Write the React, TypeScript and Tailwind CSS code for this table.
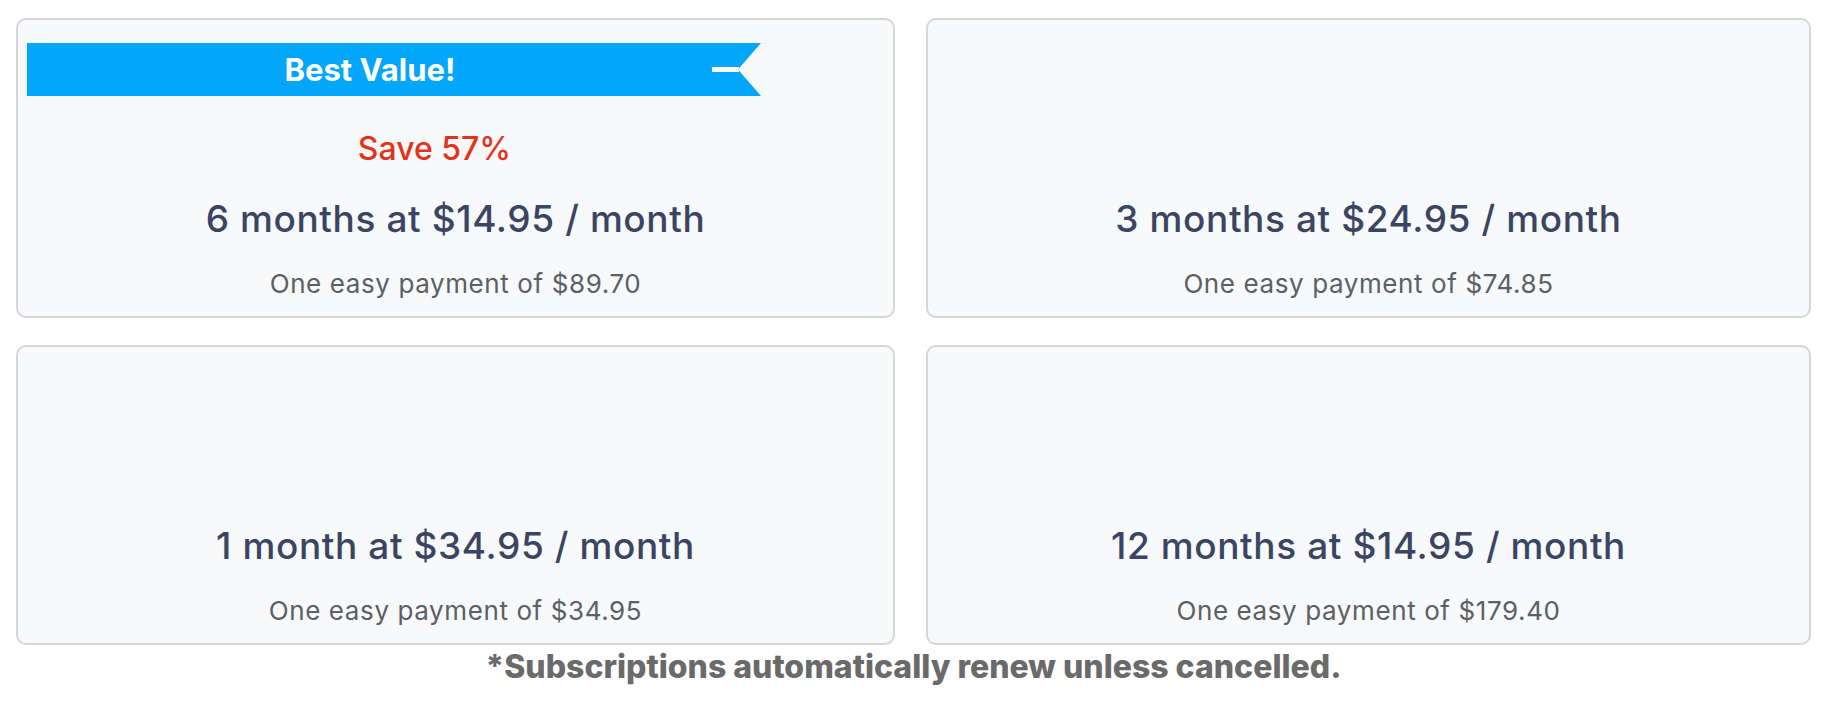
import React from "react";

type Plan = { title: string; sub: string; best?: boolean };

const plans: Plan[] = [
  { title: "6 months at $14.95 / month", sub: "One easy payment of $89.70", best: true },
  { title: "3 months at $24.95 / month", sub: "One easy payment of $74.85" },
  { title: "1 month at $34.95 / month", sub: "One easy payment of $34.95" },
  { title: "12 months at $14.95 / month", sub: "One easy payment of $179.40" },
];

function Card({ plan }: { plan: Plan }) {
  return (
    <div className="flex h-[300px] flex-col rounded-[10px] border-2 border-[#d6d6d6] bg-[#f8f9fa] pb-[17px]">
      {plan.best ? (
        <>
          <div className="relative ml-[9px] mt-[23px] h-[53px] w-[734px] bg-[#02a6fb] [clip-path:polygon(0_0,100%_0,calc(100%-23px)_50%,100%_100%,0_100%)]">
            <div className="flex h-full items-center justify-center pr-[48px] text-[31px] font-bold leading-none text-white">
              Best Value!
            </div>
            <div className="absolute right-[22px] top-[24px] h-[5px] w-[27px] bg-white" />
          </div>
          <div className="mt-[35px] pr-[42px] text-center text-[32px] font-medium leading-[36px] text-[#e4321b]">
            Save 57%
          </div>
          <div className="flex-1" />
        </>
      ) : (
        <div className="flex-1" />
      )}
      <div className="text-center text-[37px] font-medium leading-[40px] tracking-[0.6px] text-[#3a4563]">
        {plan.title}
      </div>
      <div className="mt-[30px] text-center text-[26px] leading-[30px] tracking-[0.6px] text-[#5c5f66]">
        {plan.sub}
      </div>
    </div>
  );
}

export default function App() {
  return (
    <div className="min-h-[705px] w-[1834px] bg-white pl-[16px] pr-[23px] pt-[18px] font-['Inter',sans-serif]">
      <div className="grid grid-cols-[879px_1fr] gap-x-[31px] gap-y-[27px]">
        {plans.map((p) => (
          <Card key={p.title} plan={p} />
        ))}
      </div>
      <div className="mt-[4px] text-center text-[32px] font-extrabold leading-[36px] text-[#6a6a6a]">
        *Subscriptions automatically renew unless cancelled.
      </div>
    </div>
  );
}
